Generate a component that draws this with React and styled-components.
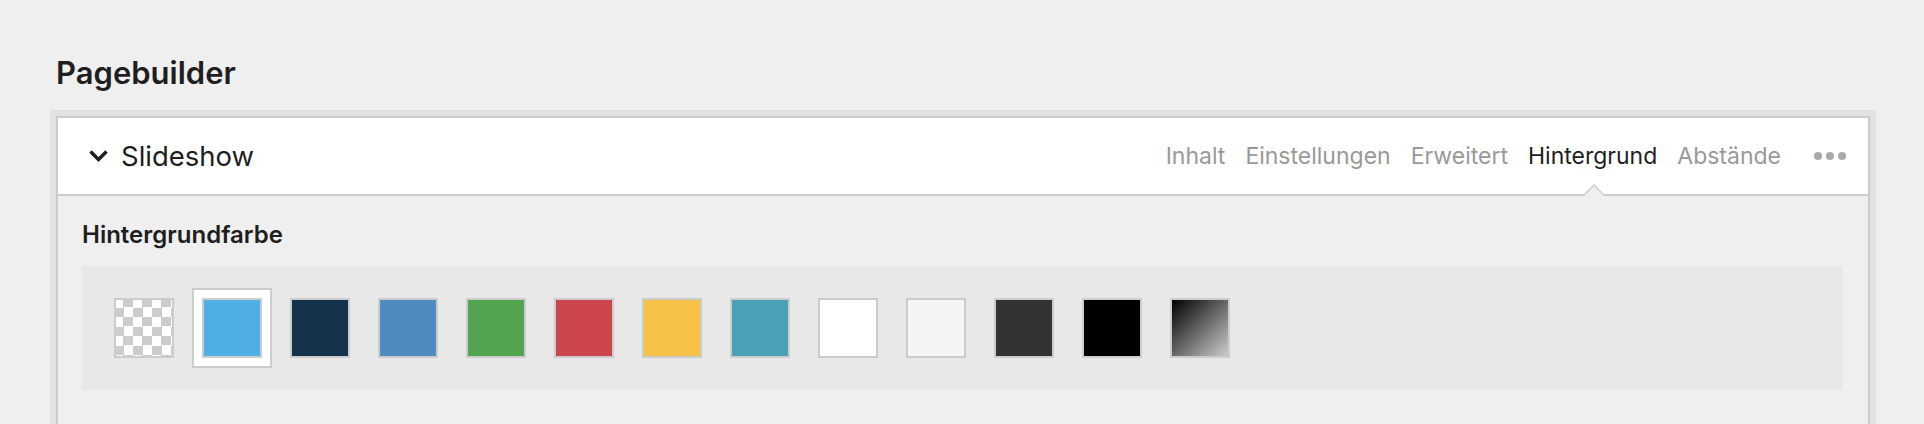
import React from 'react';
import styled, { createGlobalStyle } from 'styled-components';

const GlobalStyle = createGlobalStyle`
  html, body {
    margin: 0;
    padding: 0;
    background: #efefef;
    font-family: Inter, "Open Sans", "Liberation Sans", sans-serif;
    color: #1e1e1e;
  }
`;

const Page = styled.div`
  padding: 56px 48px 0 50px;
`;

const Title = styled.h1`
  margin: 0 0 20px 6px;
  font-size: 31px;
  line-height: 34px;
  font-weight: 600;
  color: #1e1e1e;
`;

const Frame = styled.div`
  background: #e2e2e2;
  padding: 6px 6px 0;
`;

const Panel = styled.div`
  border: 2px solid #ccc;
  border-bottom: none;
  background: #efefef;
  min-height: 400px;
`;

const Header = styled.div`
  height: 76px;
  background: #fff;
  border-bottom: 2px solid #ccc;
  display: flex;
  align-items: stretch;
  padding: 0 22px 0 30px;
`;

const Toggle = styled.div`
  display: flex;
  align-items: center;
  gap: 12px;
  font-size: 27.5px;
  color: #1e1e1e;
  flex: 1;
`;

const Tabs = styled.nav`
  display: flex;
  align-items: stretch;
  gap: 20px;
`;

const Tab = styled.div`
  position: relative;
  display: flex;
  align-items: center;
  font-size: 23px;
  color: ${(p) => (p.$active ? '#1e1e1e' : '#999')};

  ${(p) =>
    p.$active &&
    `
    &::before, &::after {
      content: '';
      position: absolute;
      left: 50%;
      width: 0;
      height: 0;
      border-style: solid;
      border-color: transparent;
    }
    &::before {
      bottom: -2px;
      margin-left: -11px;
      border-width: 0 12px 12px 12px;
      border-bottom-color: #ccc;
    }
    &::after {
      bottom: -2px;
      margin-left: -9px;
      border-width: 0 10px 10px 10px;
      border-bottom-color: #efefef;
    }
  `}
`;

const More = styled.div`
  display: flex;
  align-items: center;
  gap: 4px;
  margin-left: 33px;

  span {
    width: 8px;
    height: 8px;
    border-radius: 50%;
    background: #aaa;
  }
`;

const Body = styled.div`
  padding: 24px 25px 0 24px;
`;

const Label = styled.div`
  font-size: 24px;
  line-height: 30px;
  font-weight: 600;
  color: #1e1e1e;
  margin-bottom: 16px;
`;

const Strip = styled.div`
  background: #e8e8e8;
  height: 124px;
  display: flex;
  align-items: center;
  gap: 28px;
  padding-left: 32px;
`;

const Swatch = styled.div`
  width: 60px;
  height: 60px;
  box-sizing: border-box;
  border: 2px solid #ccc;
  background: ${(p) => p.$bg};
  box-shadow: ${(p) => (p.$selected ? '0 0 0 8px #fff, 0 0 0 10px #ccc' : 'none')};
`;

const checker =
  'repeating-conic-gradient(#ccc 0 25%, #fff 0 50%) -2px -2px / 19px 19px';

const colors = [
  checker,
  '#4eafe5',
  '#13334c',
  '#4e8bbf',
  '#52a550',
  '#cd464c',
  '#f6c247',
  '#4aa0b5',
  '#fff',
  '#f4f4f4',
  '#333',
  '#000',
  'linear-gradient(135deg, #000, #ccc)',
];

const tabs = ['Inhalt', 'Einstellungen', 'Erweitert', 'Hintergrund', 'Abstände'];

function Chevron() {
  return (
    <svg width="21" height="14" viewBox="0 0 21 14">
      <path d="M2.5 2.5 L10.5 10.5 L18.5 2.5" fill="none" stroke="#1e1e1e" strokeWidth="3.4" />
    </svg>
  );
}

export default function App() {
  return (
    <Page>
      <GlobalStyle />
      <Title>Pagebuilder</Title>
      <Frame>
        <Panel>
          <Header>
            <Toggle>
              <Chevron />
              Slideshow
            </Toggle>
            <Tabs>
              {tabs.map((t) => (
                <Tab key={t} $active={t === 'Hintergrund'}>
                  {t}
                </Tab>
              ))}
            </Tabs>
            <More>
              <span />
              <span />
              <span />
            </More>
          </Header>
          <Body>
            <Label>Hintergrundfarbe</Label>
            <Strip>
              {colors.map((c, i) => (
                <Swatch key={i} $bg={c} $selected={i === 1} />
              ))}
            </Strip>
          </Body>
        </Panel>
      </Frame>
    </Page>
  );
}
